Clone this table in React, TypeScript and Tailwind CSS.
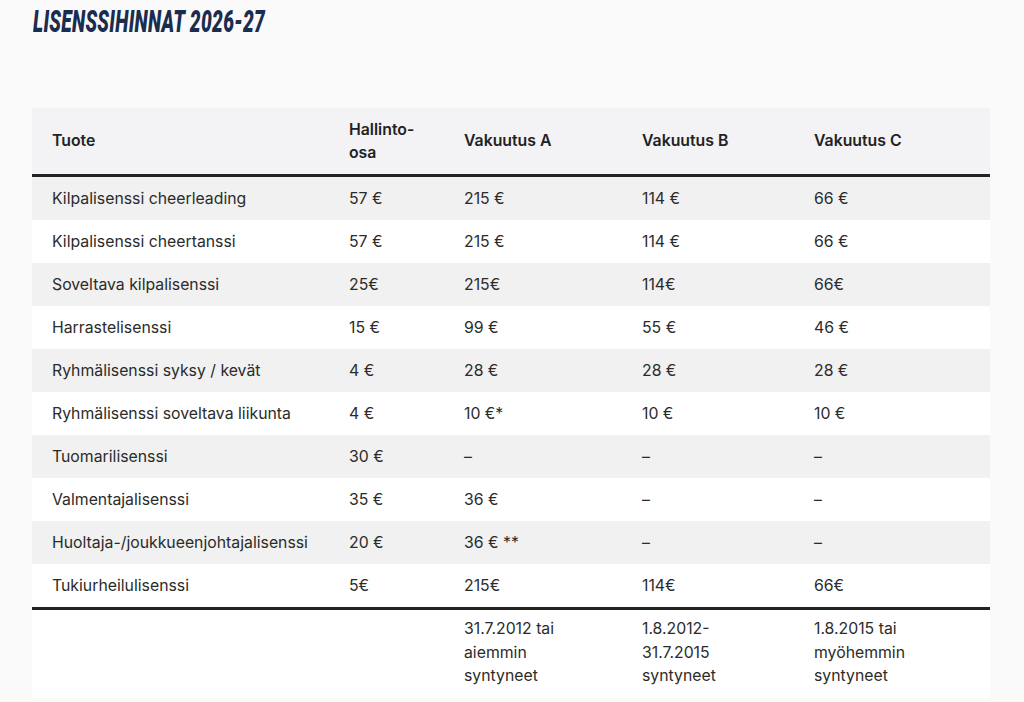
const rows: string[][] = [
  ["Kilpalisenssi cheerleading", "57 €", "215 €", "114 €", "66 €"],
  ["Kilpalisenssi cheertanssi", "57 €", "215 €", "114 €", "66 €"],
  ["Soveltava kilpalisenssi", "25€", "215€", "114€", "66€"],
  ["Harrastelisenssi", "15 €", "99 €", "55 €", "46 €"],
  ["Ryhmälisenssi syksy / kevät", "4 €", "28 €", "28 €", "28 €"],
  ["Ryhmälisenssi soveltava liikunta", "4 €", "10 €*", "10 €", "10 €"],
  ["Tuomarilisenssi", "30 €", "–", "–", "–"],
  ["Valmentajalisenssi", "35 €", "36 €", "–", "–"],
  ["Huoltaja-/joukkueenjohtajalisenssi", "20 €", "36 € **", "–", "–"],
  ["Tukiurheilulisenssi", "5€", "215€", "114€", "66€"],
]

const cols = "grid grid-cols-[297px_115px_178px_172px_196px]"

export default function App() {
  return (
    <div className="min-h-[702px] bg-[#fafafa] font-['Inter',sans-serif] text-[15.8px] text-[#2b2b2b]">
      <div className="h-[108px] pl-[33px] pt-[1px]">
        <h1 className="origin-left scale-x-[0.6] whitespace-nowrap font-['Roboto',sans-serif] text-[32px] font-black italic leading-[40px] tracking-[0.5px] text-[#1a2d4f]">
          LISENSSIHINNAT 2026-27
        </h1>
      </div>

      <div className="ml-[32px] w-[958px]">
        <div className={`${cols} h-[69px] items-center border-b-[3px] border-[#222] bg-[#f3f3f5] font-semibold text-[#222]`}>
          <div className="pl-5">Tuote</div>
          <div className="pl-5 leading-[23px]">
            Hallinto-
            <br />
            osa
          </div>
          <div className="pl-5">Vakuutus A</div>
          <div className="pl-5">Vakuutus B</div>
          <div className="pl-5">Vakuutus C</div>
        </div>

        <div className="border-b-[3px] border-[#222]">
          {rows.map((r, i) => (
            <div
              key={r[0]}
              className={`${cols} h-[43px] items-center ${i % 2 === 0 ? "bg-[#f0f1f0]" : "bg-white"}`}
            >
              {r.map((c, j) => (
                <div key={j} className="whitespace-nowrap pl-5">
                  {c}
                </div>
              ))}
            </div>
          ))}
        </div>

        <div className={`${cols} bg-white pb-[10px] pt-[7px] leading-[23.5px]`}>
          <div />
          <div />
          <div className="pl-5">
            31.7.2012 tai
            <br />
            aiemmin
            <br />
            syntyneet
          </div>
          <div className="pl-5">
            1.8.2012-
            <br />
            31.7.2015
            <br />
            syntyneet
          </div>
          <div className="pl-5">
            1.8.2015 tai
            <br />
            myöhemmin
            <br />
            syntyneet
          </div>
        </div>
      </div>
    </div>
  )
}
